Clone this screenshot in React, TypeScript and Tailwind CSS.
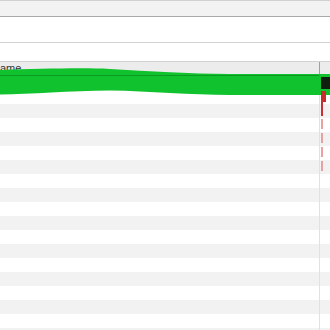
import React from "react";

const marks: Record<number, string> = {
  3: "pink",
  4: "pink",
  5: "pink",
  6: "pink",
};

export default function App() {
  const rows = Array.from({ length: 19 }, (_, i) => i);
  return (
    <div className="relative w-[330px] h-[330px] overflow-hidden bg-white" style={{ fontFamily: "'Liberation Sans', Arial, sans-serif" }}>
      <div className="h-[17px] bg-[#f2f2f2] border-t border-t-[#d0d0d0] border-b border-b-[#a9a9a9]" />
      <div className="h-[26px] bg-white border-b border-b-[#d2d2d2]" />
      <div className="h-[19px] bg-white border-b border-b-[#d2d2d2]" />
      <div className="flex h-[14px] bg-[#ececec]">
        <div className="flex-1 text-[11px] leading-[12px] text-[#333] pl-0">
          <span>ame</span>
        </div>
        <div className="w-px bg-[#a0a0a0]" />
        <div className="w-[10px]" />
      </div>
      <div className="flex flex-col">
        {rows.map((i) => {
          const bg = i === 0 ? "bg-[#10c22e]" : i % 2 === 0 ? "bg-[#f2f2f2]" : "bg-white";
          const m = marks[i];
          return (
            <div key={i} className={`flex h-[14px] ${bg}`}>
              <div className="flex-1" />
              <div className="w-px bg-[#dde0f0]" />
              <div className="w-[10px] relative">
                {m === "pink" && <div className="absolute left-[1px] top-[1px] w-[2px] h-[10px] bg-[#e8a0a0]" />}
              </div>
            </div>
          );
        })}
      </div>
      <svg className="absolute left-0 top-0 pointer-events-none" width="330" height="330" viewBox="0 0 330 330">
        <path
          d="M0 70 C 40 69, 80 67.5, 110 69 C 150 71, 190 74, 230 74 L 330 74 L 330 95 L 230 95 C 190 95, 150 91, 110 90.5 C 70 91, 30 94, 0 94.5 Z"
          fill="#10c22e"
        />
        <rect x="0" y="75" width="319" height="1" fill="#0a9a22" />
        <rect x="321" y="77" width="9" height="12" fill="#0f200f" />
        <rect x="321" y="91" width="5" height="11" fill="#cc2b2b" />
        <rect x="321" y="101" width="2" height="15" fill="#c83030" />
      </svg>
    </div>
  );
}
